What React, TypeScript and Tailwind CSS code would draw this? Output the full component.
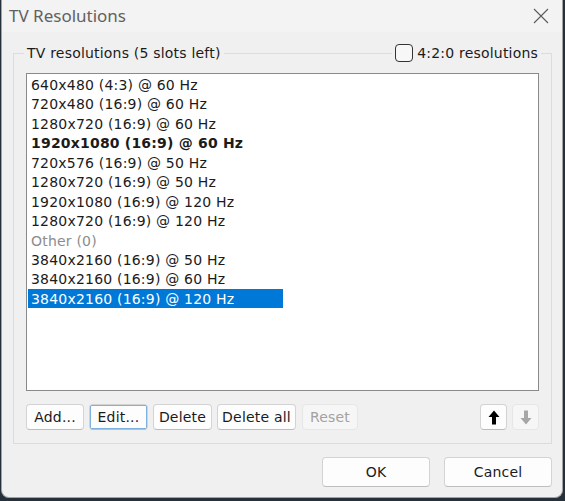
import { useState } from "react"

const rows = [
  { label: "640x480 (4:3) @ 60 Hz" },
  { label: "720x480 (16:9) @ 60 Hz" },
  { label: "1280x720 (16:9) @ 60 Hz" },
  { label: "1920x1080 (16:9) @ 60 Hz", bold: true },
  { label: "720x576 (16:9) @ 50 Hz" },
  { label: "1280x720 (16:9) @ 50 Hz" },
  { label: "1920x1080 (16:9) @ 120 Hz" },
  { label: "1280x720 (16:9) @ 120 Hz" },
  { label: "Other (0)", muted: true },
  { label: "3840x2160 (16:9) @ 50 Hz" },
  { label: "3840x2160 (16:9) @ 60 Hz" },
  { label: "3840x2160 (16:9) @ 120 Hz" },
]

function Arrow({ up, color }: { up?: boolean; color: string }) {
  return (
    <svg width="12" height="15" viewBox="0 0 12 15" className={up ? "" : "rotate-180"}>
      <path d="M6 0.5 L11.5 7 L8 7 L8 14.5 L4 14.5 L4 7 L0.5 7 Z" fill={color} />
    </svg>
  )
}

function Btn({ children, className = "" }: { children: React.ReactNode; className?: string }) {
  return (
    <button
      className={
        "flex h-[26px] items-center justify-center rounded-[4px] border border-[#d3d3d3] border-b-[#bdbdbd] bg-[#fdfdfd] text-[#1b1b1b] " +
        className
      }
    >
      {children}
    </button>
  )
}

export default function App() {
  const [selected, setSelected] = useState(11)

  return (
    <div className="h-[501px] w-[565px] bg-[#26303b] pl-px font-['DejaVu_Sans',sans-serif] text-[14px] tracking-[0.2px]">
      <div className="flex h-[498px] w-[562px] flex-col overflow-hidden rounded-b-[8px] border border-t-0 border-[#a3a3a3] bg-[#f0f0f0]">
        {/* Title bar */}
        <div className="flex h-[32px] shrink-0 items-center justify-between bg-[#f3f3f3] pl-[7px] pr-[13px]">
          <span className="font-['Noto_Sans',sans-serif] text-[17px] tracking-normal text-[#616161]">TV Resolutions</span>
          <svg width="16" height="16" viewBox="0 0 16 16">
            <path d="M1 1 L15 15 M15 1 L1 15" stroke="#5a5a5a" strokeWidth="1.1" />
          </svg>
        </div>

        {/* Group box */}
        <div className="relative ml-[11px] mt-[21px] h-[391px] w-[539px] border border-[#dcdcdc] pl-[12px] pr-[10px] pt-[19px]">
          <div className="absolute left-[10px] right-[10px] top-[-11px] flex h-[20px] items-center justify-between">
            <span className="bg-[#f0f0f0] px-[3px] text-[#1b1b1b]">TV resolutions (5 slots left)</span>
            <label className="flex items-center gap-[4px] bg-[#f0f0f0] pl-[3px] pr-[3px] text-[#1b1b1b]">
              <span className="h-[18px] w-[18px] rounded-[4px] border border-[#333333] bg-[#f7f7f7]" />
              4:2:0 resolutions
            </label>
          </div>

          {/* List */}
          <div className="h-[318px] w-[513px] border border-[#8a8a8a] bg-white p-px">
            {rows.map((r, i) => (
              <div
                key={i}
                onClick={() => setSelected(i)}
                className={
                  "h-[19.45px] w-[255px] whitespace-nowrap pl-[3px] pt-px leading-[19px] " +
                  (i === selected ? "bg-[#0078d7] text-white " : r.muted ? "text-[#8c8c8c] " : "text-[#1b1b1b] ") +
                  (r.bold ? "font-bold" : "")
                }
              >
                {r.label}
              </div>
            ))}
          </div>

          {/* Buttons */}
          <div className="mt-[13px] flex w-[513px] items-center">
            <Btn className="w-[58px]">Add...</Btn>
            <Btn className="ml-[5px] w-[59px] border-[#0067c0] border-b-[#0067c0] shadow-[inset_0_0_0_0.5px_#0067c0]">Edit...</Btn>
            <Btn className="ml-[5px] w-[59px]">Delete</Btn>
            <Btn className="ml-[5px] w-[79px]">Delete all</Btn>
            <button className="ml-[6px] flex h-[26px] w-[56px] items-center justify-center rounded-[4px] border border-[#e6e6e6] bg-[#f6f6f6] text-[#a2a2a2]">
              Reset
            </button>
            <Btn className="ml-auto w-[27px]">
              <Arrow up color="#000000" />
            </Btn>
            <button className="ml-[5px] flex h-[26px] w-[27px] items-center justify-center rounded-[4px] border border-[#e6e6e6] bg-[#f6f6f6]">
              <Arrow color="#a6a6a6" />
            </button>
          </div>
        </div>

        {/* Dialog buttons */}
        <div className="ml-[11px] mt-[13px] flex w-[539px] justify-end gap-[14px]">
          <Btn className="h-[30px] w-[108px]">OK</Btn>
          <Btn className="h-[30px] w-[108px]">Cancel</Btn>
        </div>
      </div>
    </div>
  )
}
